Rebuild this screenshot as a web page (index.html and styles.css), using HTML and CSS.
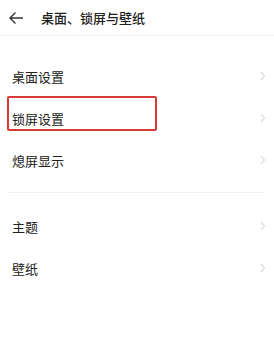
FILE: index.html
```html
<!DOCTYPE html>
<html>
<head>
  <meta charset="UTF-8">
  <title>桌面、锁屏与壁纸</title>
  <link rel="stylesheet" href="styles.css">
</head>
<body>
<div class="page">
  <div class="header">
    <svg class="back" width="16" height="14" viewBox="0 0 16 14">
      <path d="M15 7H2M7.5 1.5L2 7l5.5 5.5" fill="none" stroke="#333" stroke-width="1.4"/>
    </svg>
    <div class="title">桌面、锁屏与壁纸</div>
  </div>

  <div class="group first">
    <div class="item"><span>桌面设置</span><svg class="chevron" width="6" height="10" viewBox="0 0 6 10"><path d="M1 1l3.5 4L1 9" fill="none" stroke="#c8c8c8" stroke-width="1"/></svg></div>
    <div class="item"><span>锁屏设置</span><svg class="chevron" width="6" height="10" viewBox="0 0 6 10"><path d="M1 1l3.5 4L1 9" fill="none" stroke="#c8c8c8" stroke-width="1"/></svg><div class="mark"></div></div>
    <div class="item"><span>熄屏显示</span><svg class="chevron" width="6" height="10" viewBox="0 0 6 10"><path d="M1 1l3.5 4L1 9" fill="none" stroke="#c8c8c8" stroke-width="1"/></svg></div>
  </div>

  <div class="divider"></div>

  <div class="group">
    <div class="item"><span>主题</span><svg class="chevron" width="6" height="10" viewBox="0 0 6 10"><path d="M1 1l3.5 4L1 9" fill="none" stroke="#c8c8c8" stroke-width="1"/></svg></div>
    <div class="item"><span>壁纸</span><svg class="chevron" width="6" height="10" viewBox="0 0 6 10"><path d="M1 1l3.5 4L1 9" fill="none" stroke="#c8c8c8" stroke-width="1"/></svg></div>
  </div>
</div>
</body>
</html>
```

FILE: styles.css
```css
body {
  margin: 0;
  background: #fff;
  font-family: "Noto Sans CJK SC", "Noto Sans", sans-serif;
  color: #222;
}

.page {
  width: 274px;
  height: 364px;
}

.header {
  display: flex;
  align-items: center;
  height: 36px;
  border-bottom: 1px solid #f3f3f3;
  box-sizing: border-box;
}

.back {
  margin-left: 8px;
  margin-right: 17px;
}

.title {
  font-size: 13px;
  font-weight: 500;
  color: #222;
}

.group.first {
  margin-top: 19px;
}

.item {
  position: relative;
  display: flex;
  align-items: center;
  justify-content: space-between;
  height: 42px;
  padding: 0 8px 0 12px;
  font-size: 13px;
}

/* 빨간 표시 박스 */
.mark {
  position: absolute;
  left: 7px;
  top: -1px;
  width: 150px;
  height: 35px;
  border: 2px solid #d83a3a;
  border-radius: 2px;
  box-sizing: border-box;
}

.divider {
  height: 1px;
  background: #f2f2f2;
  margin: 11px 9px 12px 8px;
}
```
